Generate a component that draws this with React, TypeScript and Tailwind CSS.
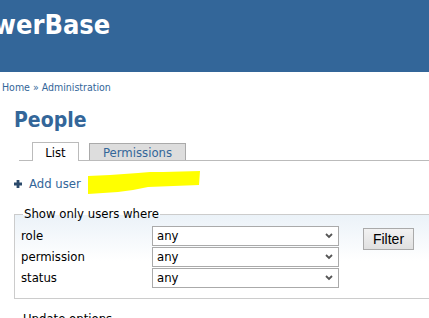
import { useState } from 'react';

const FILTERS = ['role', 'permission', 'status'];

function Chevron() {
  return (
    <svg className="w-[8px] h-[6px]" viewBox="0 0 8 6">
      <path d="M1 1l3 3 3-3" fill="none" stroke="#555" strokeWidth={1.8} />
    </svg>
  );
}

export default function App() {
  const [tab, setTab] = useState('list');

  return (
    <div
      className="w-[429px] h-[318px] overflow-hidden bg-white text-[#333]"
      style={{ fontFamily: '"DejaVu Sans Condensed", "DejaVu Sans", sans-serif' }}
    >
      {/* Site header */}
      <div className="h-[72px] bg-[#336699] overflow-hidden">
        <div className="-ml-[41px] pt-[9px] text-[27px] leading-[32px] font-bold text-white whitespace-nowrap">
          PowerBase
        </div>
      </div>

      {/* Breadcrumb */}
      <div className="pl-[2px] pt-[8px] text-[10.5px] leading-[14px] text-[#336699]">
        Home » Administration
      </div>

      <h1 className="ml-[14px] mt-[13px] text-[21px] leading-[26px] font-bold text-[#336699]">People</h1>

      {/* Tabs */}
      <div className="ml-[19px] mt-[9px] flex items-end border-b border-[#bbb] h-[19px]">
        <button
          onClick={() => setTab('list')}
          className={`ml-[13px] w-[47px] h-[19px] -mb-px border border-b-0 border-[#bbb] text-[13px] leading-[17px] ${
            tab === 'list' ? 'bg-white text-black' : 'bg-[#ddd] text-[#336699]'
          }`}
        >
          List
        </button>
        <button
          onClick={() => setTab('permissions')}
          className={`ml-[10px] w-[97px] h-[17px] border border-b-0 border-[#aaa] text-[13px] leading-[15px] ${
            tab === 'permissions' ? 'bg-white text-black' : 'bg-[#ddd] text-[#336699]'
          }`}
        >
          Permissions
        </button>
      </div>

      {/* Add user */}
      <div className="ml-[14px] mt-[10px] flex items-center h-[25px]">
        <svg className="w-[8px] h-[8px]" viewBox="0 0 8 8">
          <path d="M2.6 0h2.8v2.6H8v2.8H5.4V8H2.6V5.4H0V2.6h2.6z" fill="#2b4a6b" />
        </svg>
        <span className="ml-[7px] text-[13px] text-[#336699]">Add user</span>
        <svg className="ml-[7px] w-[112px] h-[25px]" viewBox="0 0 112 25">
          <polygon
            points="0,5 22,4 36,3 50,2 62,1 75,1 112,0 111,14 60,16 45,19 30,21 0,23"
            fill="#ffff00"
          />
        </svg>
      </div>

      {/* Filter box */}
      <fieldset className="ml-[14px] mt-[11px] w-[430px] h-[92px] border border-[#ccc] bg-gradient-to-b from-[#ebf2f8] to-white to-[55%]">
        <legend className="ml-[8px] px-[1px] text-[13px] leading-[14px] text-black">Show only users where</legend>
        <div className="flex pt-[5px] pl-[6px]">
          <div className="flex flex-col gap-[1px]">
            {FILTERS.map((f) => (
              <div key={f} className="flex items-center h-[20px]">
                <span className="w-[131px] text-[13px] text-black">{f}</span>
                <div className="w-[187px] h-[20px] border border-[#aaa] bg-white flex items-center justify-between pl-[4px] pr-[5px]">
                  <span className="text-[13px] leading-[16px] text-black">any</span>
                  <Chevron />
                </div>
              </div>
            ))}
          </div>
          <button
            className="ml-[24px] mt-[2px] w-[51px] h-[22px] border border-[#aaa] bg-gradient-to-b from-[#f2f2f2] to-[#e0e0e0] text-[14px] text-black"
            style={{ fontFamily: '"Liberation Sans", sans-serif' }}
          >
            Filter
          </button>
        </div>
      </fieldset>

      <div className="ml-[23px] mt-[10px] text-[13px] text-black">Update options</div>
    </div>
  );
}
